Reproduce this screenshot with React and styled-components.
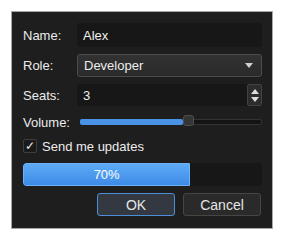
import React, { useState } from 'react';
import styled, { createGlobalStyle } from 'styled-components';

const GlobalStyle = createGlobalStyle`
    html, body {
        margin: 0;
        padding: 0;
        background: #ffffff;
    }
    body {
        font-family: "Liberation Sans", Arial, sans-serif;
        font-size: 13px;
    }
`;

const Page = styled.div`
    width: 284px;
    height: 240px;
    padding: 11px 0 0 11px;
    box-sizing: border-box;
`;

const Panel = styled.div`
    width: 262px;
    height: 218px;
    box-sizing: border-box;
    background: #1e1e1e;
    border: 1px solid #a8a8a8;
    padding: 11px 10px 0 11px;
    display: flex;
    flex-direction: column;
    color: #ececec;
`;

const Row = styled.div`
    display: flex;
    align-items: center;
    height: ${p => p.h}px;
    margin-top: ${p => p.mt || 0}px;
`;

const Label = styled.div`
    width: 54px;
    flex: none;
    font-size: 13px;
    color: #ececec;
`;

const TextInput = styled.input`
    flex: 1;
    min-width: 0;
    width: 0;
    height: 100%;
    box-sizing: border-box;
    background: #171717;
    border: none;
    border-radius: 3px;
    padding: 0 6px;
    color: #f0f0f0;
    font-family: inherit;
    font-size: 13px;
    outline: none;
`;

const Select = styled.div`
    flex: 1;
    min-width: 0;
    height: 100%;
    box-sizing: border-box;
    background: linear-gradient(#323232, #2a2a2a);
    border: 1px solid #4c4c4c;
    border-radius: 3px;
    padding: 0 8px 0 6px;
    display: flex;
    align-items: center;
    justify-content: space-between;
    font-size: 13px;
`;

const Caret = styled.div`
    width: 0;
    height: 0;
    border-left: 4px solid transparent;
    border-right: 4px solid transparent;
    border-top: 5px solid #d0d0d0;
`;

const SpinWrap = styled.div`
    flex: 1;
    min-width: 0;
    height: 100%;
    display: flex;
    background: #171717;
    border-radius: 3px;
`;

const SpinInput = styled(TextInput)`
    background: transparent;
`;

const Spinner = styled.div`
    width: 15px;
    flex: none;
    box-sizing: border-box;
    background: #2c2c2c;
    border: 1px solid #424242;
    border-radius: 2px;
    display: flex;
    flex-direction: column;
    align-items: center;
    justify-content: center;
    gap: 3px;
`;

const Arrow = styled.div`
    width: 0;
    height: 0;
    border-left: 4px solid transparent;
    border-right: 4px solid transparent;
    ${p => p.up ? 'border-bottom: 5px solid #dcdcdc;' : 'border-top: 5px solid #dcdcdc;'}
`;

const SliderLabel = styled(Label)`
    width: 57px;
`;

const Track = styled.div`
    flex: 1;
    height: 4px;
    position: relative;
    background: #141414;
    border: 1px solid #333;
    border-radius: 2px;
`;

const Fill = styled.div`
    position: absolute;
    left: -1px;
    top: -1px;
    bottom: -1px;
    background: #4a92e6;
    border-radius: 2px;
`;

const Thumb = styled.div`
    position: absolute;
    top: -5px;
    width: 11px;
    height: 11px;
    box-sizing: border-box;
    background: #353535;
    border: 1px solid #4e4e4e;
    border-radius: 3px;
    margin-left: -1px;
`;

const Check = styled.div`
    width: 14px;
    height: 14px;
    box-sizing: border-box;
    border: 1px solid #3e3e3e;
    background: #1a1a1a;
    border-radius: 2px;
    display: flex;
    align-items: center;
    justify-content: center;
    font-size: 12px;
    color: #e8e8e8;
    margin-right: 5px;
`;

const CheckText = styled.span`
    font-size: 13px;
`;

const Progress = styled.div`
    flex: 1;
    height: 100%;
    background: #171717;
    border-radius: 3px;
    overflow: hidden;
`;

const ProgressFill = styled.div`
    height: 100%;
    background: linear-gradient(#5eaaf7, #3d8be6);
    border: 1px solid #6cb2f8;
    box-sizing: border-box;
    border-radius: 3px 0 0 3px;
    display: flex;
    align-items: center;
    justify-content: center;
    color: #ffffff;
    font-size: 13px;
`;

const Buttons = styled(Row)`
    justify-content: flex-end;
    gap: 8px;
    margin-right: 1px;
`;

const Button = styled.button`
    width: 78px;
    height: 100%;
    box-sizing: border-box;
    border-radius: 3px;
    font-family: inherit;
    font-size: 14px;
    color: #e6e6e6;
    background: ${p => p.primary ? '#343941' : '#2a2a2a'};
    border: 1px solid ${p => p.primary ? '#4c8fd9' : '#464646'};
    padding: 0;
`;

export default function App() {
    const [name, setName] = useState('Alex');
    const [seats, setSeats] = useState('3');
    const volume = 0.57;
    const progress = 0.7;

    return (
        <Page>
            <GlobalStyle />
            <Panel>
                <Row h={24}>
                    <Label>Name:</Label>
                    <TextInput value={name} onChange={e => setName(e.target.value)} />
                </Row>
                <Row h={23} mt={7}>
                    <Label>Role:</Label>
                    <Select>
                        <span>Developer</span>
                        <Caret />
                    </Select>
                </Row>
                <Row h={22} mt={7}>
                    <Label>Seats:</Label>
                    <SpinWrap>
                        <SpinInput value={seats} onChange={e => setSeats(e.target.value)} />
                        <Spinner>
                            <Arrow up />
                            <Arrow />
                        </Spinner>
                    </SpinWrap>
                </Row>
                <Row h={16} mt={8}>
                    <SliderLabel>Volume:</SliderLabel>
                    <Track>
                        <Fill style={{ width: volume * 100 + '%' }} />
                        <Thumb style={{ left: volume * 100 + '%' }} />
                    </Track>
                </Row>
                <Row h={16} mt={8}>
                    <Check>✓</Check>
                    <CheckText>Send me updates</CheckText>
                </Row>
                <Row h={23} mt={9}>
                    <Progress>
                        <ProgressFill style={{ width: progress * 100 + '%' }}>70%</ProgressFill>
                    </Progress>
                </Row>
                <Buttons h={23} mt={7}>
                    <Button primary>OK</Button>
                    <Button>Cancel</Button>
                </Buttons>
            </Panel>
        </Page>
    );
}
